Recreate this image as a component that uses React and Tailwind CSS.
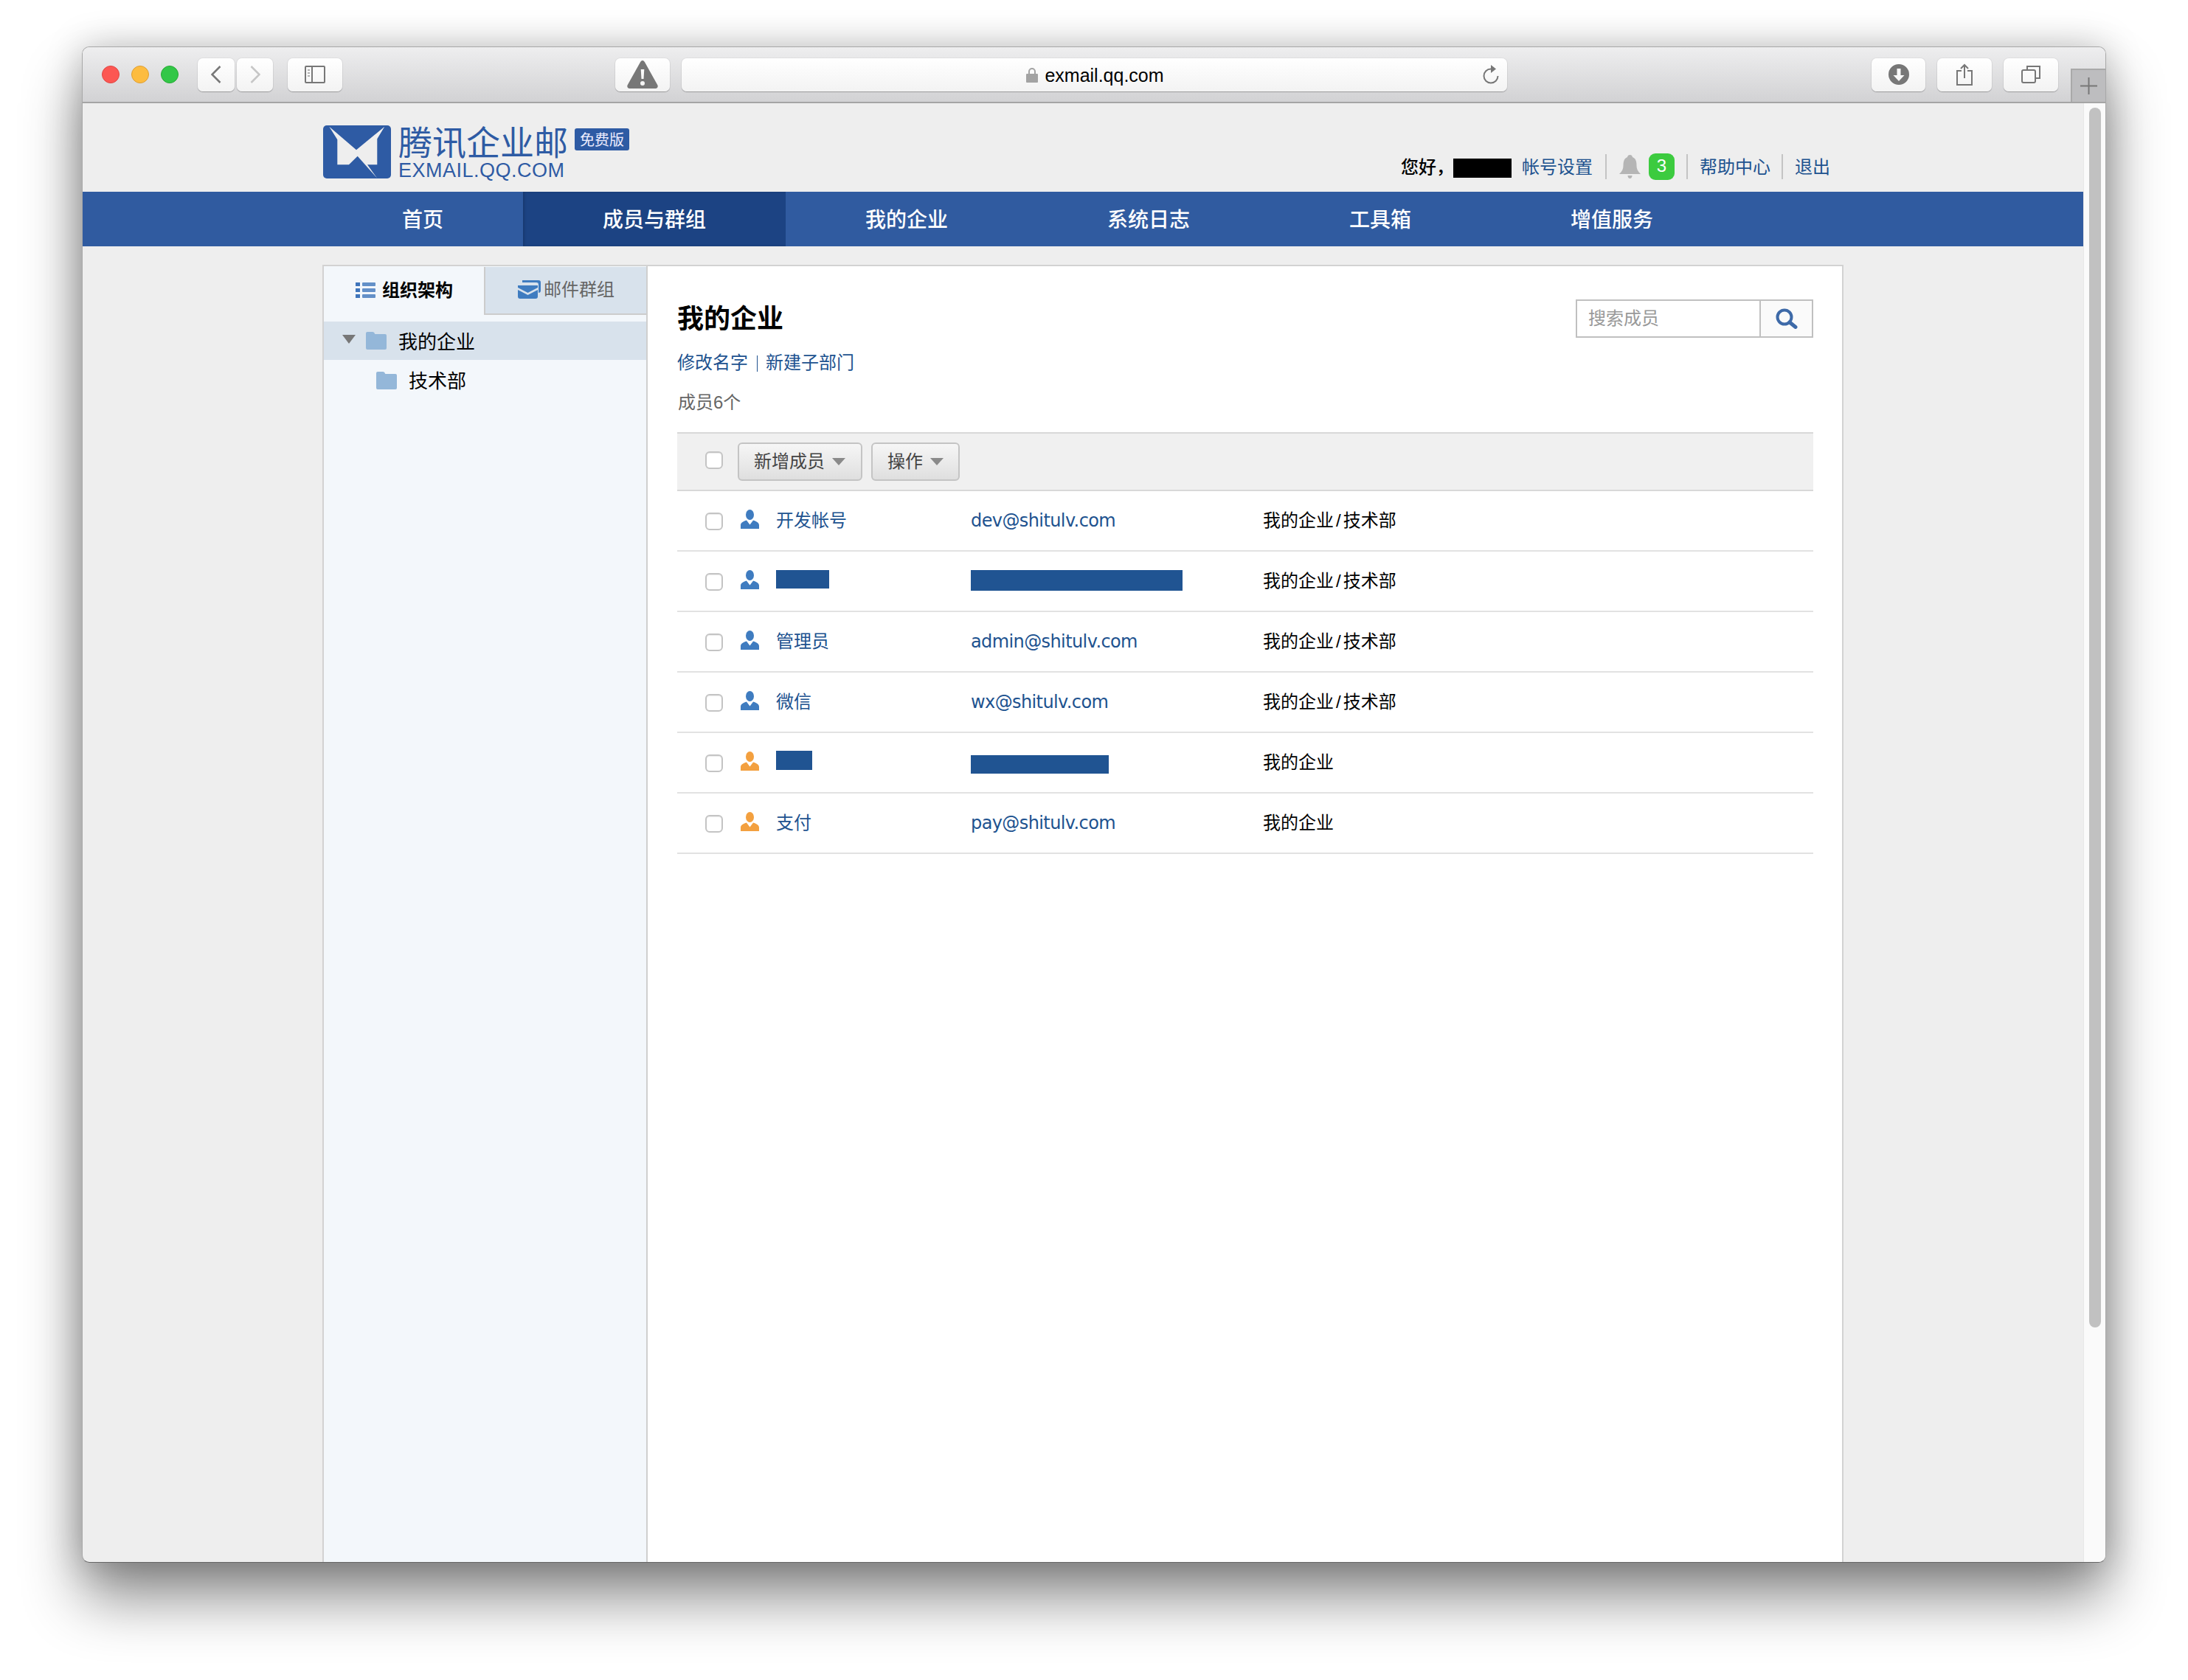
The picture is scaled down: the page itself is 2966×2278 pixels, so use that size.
const cjk = "font-['Helvetica_Neue','Liberation_Sans','Noto_Sans_CJK_SC',sans-serif]";

const navItems = ["首页", "成员与群组", "我的企业", "系统日志", "工具箱", "增值服务"];

const members = [
  { name: "开发帐号", email: "dev@shitulv.com", dept: "我的企业", sub: "技术部" },
  { name: null, nameBox: "w-[72px] h-[25px] mt-[-6px]", emailBox: "w-[287px] h-[28px] mt-[-2px]", dept: "我的企业", sub: "技术部" },
  { name: "管理员", email: "admin@shitulv.com", dept: "我的企业", sub: "技术部" },
  { name: "微信", email: "wx@shitulv.com", dept: "我的企业", sub: "技术部" },
  { name: null, orange: true, nameBox: "w-[49px] h-[26px] mt-[-6px]", emailBox: "w-[187px] h-[25px] mt-[5px]", dept: "我的企业" },
  { name: "支付", orange: true, email: "pay@shitulv.com", dept: "我的企业" },
];

const BarButton = ({ className, children }) => (
  <div className={`h-[45px] flex items-center justify-center rounded-[7px] bg-gradient-to-b from-white to-[#f3f3f3] shadow-[0_1px_1px_rgba(0,0,0,0.25),0_0_0_1px_rgba(0,0,0,0.04)] ${className}`}>
    {children}
  </div>
);

const Logo = () => (
  <svg width="92" height="72" viewBox="0 0 92 72" className="shrink-0">
    <rect width="92" height="72" rx="5" fill="#2e5ba4" />
    <path
      d="M8.3 1.7 45 33.3 83.3 1.7 73.3 18.3V53.3H60L73.3 71.7 46.7 41.7 35 53.3H19.3V19.3Z"
      fill="#eeeeee"
    />
  </svg>
);

const Folder = () => (
  <svg width="28" height="24" viewBox="0 0 28 24" className="shrink-0">
    <path d="M0 2a2 2 0 0 1 2-2h7a3 3 0 0 1 3 2.500 1 1 0 0 0 1 .5h13a2 2 0 0 1 2 2v17a2 2 0 0 1-2 2H2a2 2 0 0 1-2-2Z" fill="#94b7d9" />
  </svg>
);

const Person = ({ orange }) => (
  <svg width="25" height="26" viewBox="0 0 25 26" className="shrink-0">
    <ellipse cx="12.500" cy="7" rx="5.500" ry="7" fill={orange ? "#f3a03f" : "#3f7cc0"} />
    <path
      d="M0 26v-5c0-3 3-5 8-6.500l4.500 6 4.500-6c5 1.500 8 3.500 8 6.500v5Z"
      fill={orange ? "#f3a03f" : "#3f7cc0"}
    />
  </svg>
);

const Caret = () => <span className="w-0 h-0 border-x-[9px] border-x-transparent border-t-[10px] border-t-[#8a8a8a]" />;

const Checkbox = () => (
  <span className="block w-[24px] h-[24px] shrink-0 rounded-[6px] border-2 border-[#c4c4c4] bg-white shadow-[inset_0_1px_1px_rgba(0,0,0,0.08)]" />
);

const ToolButton = ({ label, className }) => (
  <div className={`h-[52px] flex items-center rounded-[6px] border-2 border-[#c4c4c4] bg-gradient-to-b from-[#f6f6f6] to-[#dfdfdf] text-[24px] text-[#444] ${className}`}>
    {label}
    <Caret />
  </div>
);

const MemberRow = ({ m }) => (
  <div className="h-[82px] flex items-center border-b-2 border-[#e2e2e2]">
    <div className="w-[398px] flex items-center pl-[38px]">
      <span className="mt-[2px]"><Checkbox /></span>
      <span className="ml-[24px] mt-[-4px]"><Person orange={m.orange} /></span>
      {m.name ? (
        <span className="ml-[23px] text-[24px] leading-[30px] text-[#20528f]">{m.name}</span>
      ) : (
        <span className={`ml-[23px] bg-[#205492] ${m.nameBox}`} />
      )}
    </div>
    <div className="w-[396px] flex">
      {m.email ? (
        <span className="font-['DejaVu_Sans',sans-serif] text-[24px] leading-[30px] text-[#20528f] tracking-[-0.6px]">{m.email}</span>
      ) : (
        <span className={`bg-[#205492] ${m.emailBox}`} />
      )}
    </div>
    <div className="text-[24px] leading-[30px] text-black">
      {m.dept}
      {m.sub && <span className="mx-[3px]">/</span>}
      {m.sub}
    </div>
  </div>
);

const Toolbar = () => (
  <div className="h-[76px] shrink-0 flex bg-gradient-to-b from-[#eeeeef] to-[#d2d2d4] border-b-2 border-[#a5a5a5]">
    <div className="flex items-center h-[74px] pl-[26px]">
      <span className="w-[24px] h-[24px] rounded-full bg-[#fc5753] border border-[#df4744]" />
      <span className="ml-[16px] w-[24px] h-[24px] rounded-full bg-[#fdbc40] border border-[#de9f34]" />
      <span className="ml-[16px] w-[24px] h-[24px] rounded-full bg-[#33c748] border border-[#27aa35]" />
      <BarButton className="ml-[26px] w-[50px]">
        <svg width="14" height="24" viewBox="0 0 14 24" fill="none" stroke="#777" strokeWidth="2.500">
          <path d="M12.500 1 1.500 12l11 11" />
        </svg>
      </BarButton>
      <BarButton className="ml-[3px] w-[49px]">
        <svg width="14" height="24" viewBox="0 0 14 24" fill="none" stroke="#c6c6c6" strokeWidth="2.500">
          <path d="M1.500 1l11 11-11 11" />
        </svg>
      </BarButton>
      <BarButton className="ml-[20px] w-[74px]">
        <svg width="28" height="24" viewBox="0 0 28 24" fill="none" stroke="#777" strokeWidth="2">
          <rect x="1" y="1" width="26" height="22" rx="1" />
          <path d="M10 1v22" />
          <path d="M4 6h3M4 10h3M4 14h3" strokeWidth="1.500" stroke="#999" />
        </svg>
      </BarButton>
      <BarButton className="ml-[370px] w-[74px]">
        <svg width="42" height="38" viewBox="0 0 42 38">
          <path fillRule="evenodd" d="M21 0c1.500 0 2.300 1 3 2.300l17.300 31c1 2 .2 4.700-2.800 4.700H3.500C.5 38-.3 35.300.7 33.300L18 2.300C18.700 1 19.500 0 21 0Zm-2.300 12 .8 13h3l.8-13Zm2.300 16a3 3 0 1 0 0 6 3 3 0 0 0 0-6Z" fill="#777" />
        </svg>
      </BarButton>
      <div className="ml-[16px] w-[1119px] h-[45px] relative flex items-center justify-center rounded-[7px] bg-gradient-to-b from-white to-[#f3f3f3] shadow-[0_1px_1px_rgba(0,0,0,0.25),0_0_0_1px_rgba(0,0,0,0.04)]">
        <svg width="16" height="21" viewBox="0 0 16 21" className="mr-[9px] ml-[2px]">
          <path d="M3 9V6a5 5 0 0 1 10 0v3h-2V6a3 3 0 0 0-6 0v3Z" fill="#a3a3a3" />
          <rect y="9" width="16" height="12" rx="1" fill="#a3a3a3" />
        </svg>
        <span className="font-['Liberation_Sans',sans-serif] text-[25px] leading-[30px] text-black mt-[2px]">exmail.qq.com</span>
        <svg width="24" height="26" viewBox="0 0 24 26" fill="none" className="absolute right-[10px] top-[9px]">
          <path d="M12 5.500A9.500 9.500 0 1 0 21.500 15" stroke="#777" strokeWidth="2" />
          <path d="M12 0l7 5.500-7 5.500Z" fill="#777" />
        </svg>
      </div>
      <BarButton className="ml-[494px] w-[73px]">
        <svg width="28" height="28" viewBox="0 0 28 28">
          <path fillRule="evenodd" d="M14 0a14 14 0 1 1 0 28 14 14 0 0 1 0-28Zm-2.500 6v9H6.500L14 23l7.500-8h-5V6Z" fill="#777" />
        </svg>
      </BarButton>
      <BarButton className="ml-[16px] w-[74px]">
        <svg width="24" height="30" viewBox="0 0 24 30" fill="none" stroke="#777" strokeWidth="2">
          <path d="M8 10H2v19h20V10h-6M12 20V2M7 7l5-5 5 5" />
        </svg>
      </BarButton>
      <BarButton className="ml-[16px] w-[74px]">
        <svg width="26" height="24" viewBox="0 0 26 24" fill="none" stroke="#777" strokeWidth="2">
          <path d="M8 5V1h17v16h-5" />
          <rect x="1" y="6" width="18" height="17" rx="2" />
        </svg>
      </BarButton>
    </div>
    <div className="ml-[17px] self-end w-[47px] h-[45px] flex items-center justify-center bg-[#bdbdbf] border-t-2 border-l-2 border-[#a9a9a9]">
      <svg width="23" height="23" viewBox="0 0 23 23" stroke="#777" strokeWidth="2">
        <path d="M11.500 0v23M0 11.500h23" />
      </svg>
    </div>
  </div>
);

const Header = () => (
  <div className="w-[2062px] h-[120px] mx-auto flex justify-between">
    <div className="flex pt-[30px] pl-[1px]">
      <Logo />
      <div className="ml-[10px] font-['Noto_Sans_CJK_SC',sans-serif] text-[#2e5ba4]">
        <div className="text-[46px] leading-[44px] h-[44px] mt-[-2px]">腾讯企业邮</div>
        <div className="mt-[6px] font-['Liberation_Sans',sans-serif] text-[27px] leading-[26px] tracking-[0.5px]">EXMAIL.QQ.COM</div>
      </div>
      <div className="ml-[9px] mt-[4px] w-[74px] h-[30px] rounded-[3px] bg-[#2e5ba4] text-[#eef] text-[20px] leading-[30px] text-center font-['Noto_Sans_CJK_SC',sans-serif]">免费版</div>
    </div>
    <div className="flex items-center pt-[67px] h-[120px] pb-[15px] pr-[18px] text-[24px] leading-[30px] text-[#20528f]">
      <span className="text-black font-medium mt-[2px]">您好，</span>
      <span className="ml-[-1px] mt-[4px] w-[79px] h-[26px] bg-black" />
      <span className="ml-[14px] mt-[2px]">帐号设置</span>
      <span className="ml-[17px] w-[2px] h-[34px] bg-[#c4c4c4]" />
      <svg width="29" height="32" viewBox="0 0 29 32" className="ml-[17px]">
        <path d="M14.500 0c2 0 3 1 3.500 3 5 2 5.500 7 5.500 12 0 4 1.500 7 5.500 11H0c4-4 5.500-7 5.500-11 0-5 .5-10 5.500-12 .5-2 1.500-3 3.500-3Z" fill="#b5b5b5" />
        <path d="M11.500 28h6c0 2-1 4-3 4s-3-2-3-4Z" fill="#b5b5b5" />
      </svg>
      <span className="ml-[11px] w-[35px] h-[36px] rounded-[9px] bg-[#3ccb3f] text-white text-center leading-[34px]">3</span>
      <span className="ml-[16px] w-[2px] h-[34px] bg-[#c4c4c4]" />
      <span className="ml-[16px] mt-[2px]">帮助中心</span>
      <span className="ml-[15px] w-[2px] h-[34px] bg-[#c4c4c4]" />
      <span className="ml-[16px] mt-[2px]">退出</span>
    </div>
  </div>
);

const Nav = () => (
  <div className="h-[74px] shrink-0 bg-[#305ba0]">
    <div className="w-[2062px] mx-auto flex">
      {navItems.map((item) => (
        <div
          key={item}
          className={`h-[74px] px-[108px] pt-[3px] flex items-center text-[28px] font-medium text-white ${
            item === "成员与群组" ? "bg-[#1c4383] shadow-[inset_2px_0_3px_rgba(0,0,0,0.15)]" : ""
          }`}
        >
          {item}
        </div>
      ))}
    </div>
  </div>
);

const Sidebar = () => (
  <div className="w-[439px] shrink-0 bg-[#f3f7fb] border-r-2 border-[#cfcfcf]">
    <div className="flex h-[66px] pt-[1px]">
      <div className="w-[217px] flex items-center pl-[43px] pb-[2px]">
        <svg width="27" height="21" viewBox="0 0 27 21" fill="#3f75bb">
          <rect width="6" height="5" /><rect x="9" width="18" height="5" rx="1" opacity="0.8" />
          <rect y="8" width="6" height="5" /><rect x="9" y="8" width="18" height="5" rx="1" opacity="0.8" />
          <rect y="16" width="6" height="5" /><rect x="9" y="16" width="18" height="5" rx="1" opacity="0.8" />
        </svg>
        <span className="ml-[9px] text-[24px] leading-[30px] font-bold text-black">组织架构</span>
      </div>
      <div className="flex-1 flex items-center pl-[44px] pb-[2px] bg-[#d8e2ec] border-l-2 border-b-2 border-[#cccccc]">
        <svg width="31" height="25" viewBox="0 0 31 25">
          <path d="M6 0h22a3 3 0 0 1 3 3v11a3 3 0 0 1-3 3V6a3 3 0 0 0-3-3H6Z" fill="#3f7cc0" />
          <path d="M0 7h27v3l-13.500 7L0 10Z" fill="#3f7cc0" />
          <path d="M0 13l13.500 7L27 13v9a3 3 0 0 1-3 3H3a3 3 0 0 1-3-3Z" fill="#3f7cc0" />
        </svg>
        <span className="ml-[4px] text-[24px] leading-[30px] text-[#666]">邮件群组</span>
      </div>
    </div>
    <div className="mt-[9px] h-[52px] flex items-center pl-[25px] bg-[#d8e2ec]">
      <span className="w-0 h-0 border-x-[9px] border-x-transparent border-t-[12px] border-t-[#777] mt-[-4px]" />
      <span className="ml-[14px]"><Folder /></span>
      <span className="ml-[16px] mt-[4px] text-[26px] leading-[30px] text-black">我的企业</span>
    </div>
    <div className="h-[56px] flex items-center pl-[71px]">
      <Folder />
      <span className="ml-[16px] mt-[2px] text-[26px] leading-[30px] text-black">技术部</span>
    </div>
  </div>
);

const Main = () => (
  <div className="flex-1 min-w-0 bg-white pl-[40px] pr-[39px] pt-[45px]">
    <div className="flex justify-between">
      <div>
        <h1 className="mt-[9px] text-[36px] leading-[36px] font-bold text-black">我的企业</h1>
        <div className="mt-[29px] text-[24px] leading-[24px] text-[#20528f] flex">
          <span>修改名字</span>
          <span className="ml-[12px] mr-[11px] w-[1px] h-[22px] mt-[2px] bg-[#20528f]" />
          <span>新建子部门</span>
        </div>
        <div className="mt-[30px] pl-[1px] text-[24px] leading-[24px] text-[#666]">成员6个</div>
      </div>
      <div className="w-[322px] h-[52px] flex border-2 border-[#c0c0c0]">
        <div className="w-[249px] border-r-2 border-[#c0c0c0] pl-[15px] text-[24px] leading-[47px] text-[#999]">搜索成员</div>
        <div className="flex-1 bg-[#fafafa] flex items-center justify-center">
          <svg width="30" height="28" viewBox="0 0 30 28" fill="none" stroke="#3e6aa8">
            <circle cx="12" cy="12" r="9.500" strokeWidth="4" />
            <path d="M19 19l8 6.500" strokeWidth="5" strokeLinecap="round" />
          </svg>
        </div>
      </div>
    </div>
    <div className="mt-[28px] h-[80px] flex items-center bg-[#f0f0f0] border-y-2 border-[#d8d8d8] pl-[38px]">
      <span className="mt-[-4px]"><Checkbox /></span>
      <ToolButton label="新增成员" className="ml-[20px] w-[169px] pl-[20px] gap-[10px]" />
      <ToolButton label="操作" className="ml-[12px] w-[120px] pl-[20px] gap-[10px]" />
    </div>
    {members.map((m, i) => (
      <MemberRow key={i} m={m} />
    ))}
  </div>
);

export default function App() {
  return (
    <div className={`w-[2966px] h-[2278px] overflow-hidden bg-white pt-[63px] pl-[111px] ${cjk}`}>
      <div className="w-[2744px] h-[2056px] flex flex-col overflow-hidden rounded-[10px] border border-[#a8a8a8] border-b-[#666] bg-[#eeeeee] shadow-[0_48px_80px_rgba(0,0,0,0.45),0_0_50px_rgba(0,0,0,0.22)]">
        <Toolbar />
        <div className="flex-1 min-h-0 flex">
          <div className="flex-1 min-w-0 flex flex-col">
            <Header />
            <Nav />
            <div className="flex-1 min-h-0 pt-[25px]">
              <div className="w-[2062px] h-full mx-auto flex border-x-2 border-t-2 border-[#d2d2d2]">
                <Sidebar />
                <Main />
              </div>
            </div>
          </div>
          <div className="w-[30px] shrink-0 bg-[#fafafa] border-l border-[#e8e8e8] pl-[7px] pt-[6px]">
            <div className="w-[16px] h-[1654px] rounded-full bg-[#c1c1c1]" />
          </div>
        </div>
      </div>
    </div>
  );
}
